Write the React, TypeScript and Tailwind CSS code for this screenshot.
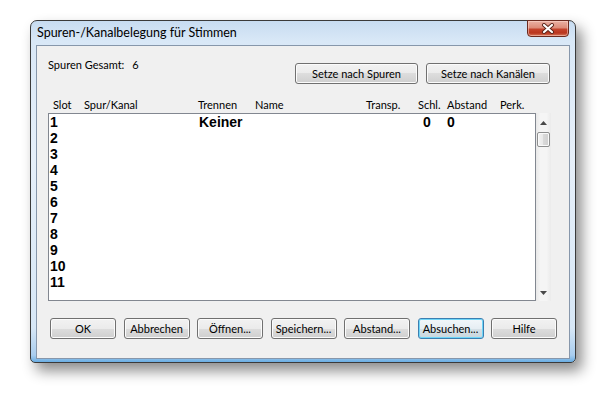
import React from "react";

const ui = "font-['Lato','Liberation_Sans',sans-serif] text-[11px] text-black";

function Btn({ label, w, def }: { label: string; w: string; def?: boolean }) {
  return (
    <div
      className={`${w} h-[21px] rounded-[3px] border flex items-center justify-center ${
        def
          ? "border-[#3c7fb1] bg-[linear-gradient(#f2f7fa_0%,#e6eef3_50%,#d6e1e7_50%,#cad7de_100%)] shadow-[inset_0_0_0_1px_#6fd6f8]"
          : "border-[#707070] bg-[linear-gradient(#f2f2f2_0%,#ebebeb_50%,#dddddd_50%,#cfcfcf_100%)] shadow-[inset_0_0_0_1px_#fbfbfb]"
      }`}
    >
      <span className="leading-none">{label}</span>
    </div>
  );
}

const headers = [
  { t: "Slot", w: "w-[31px]" },
  { t: "Spur/Kanal", w: "w-[114px]" },
  { t: "Trennen", w: "w-[57px]" },
  { t: "Name", w: "w-[111px]" },
  { t: "Transp.", w: "w-[52px]" },
  { t: "Schl.", w: "w-[29px]" },
  { t: "Abstand", w: "w-[53px]" },
  { t: "Perk.", w: "w-[40px]" },
];

const bottom = ["OK", "Abbrechen", "Öffnen...", "Speichern...", "Abstand...", "Absuchen...", "Hilfe"];

export default function App() {
  const rows = Array.from({ length: 11 }, (_, i) => i + 1);
  return (
    <div className={`w-[613px] h-[393px] bg-white pt-[20px] pl-[30px] overflow-hidden ${ui}`}>
      <div className="w-[546px] h-[343px] flex flex-col rounded-t-[7px] rounded-b-[5px] border border-[#3a3a3a] shadow-[6px_8px_14px_rgba(0,0,0,0.45)] bg-[linear-gradient(180deg,#c7dcf1_0%,#d9e8f7_6%,#e6eff9_40%,#d7e7f6_90%,#a9cdee_98%,#6aaee3_100%)]">
        {/* title bar */}
        <div className="h-[24px] flex justify-between pl-[6px] pr-[6px]">
          <span className="self-center text-[12.5px]">Spuren-/Kanalbelegung für Stimmen</span>
          <div className="-mt-[1px] w-[42px] h-[17px] rounded-b-[4px] border border-[#6b2a1f] flex items-center justify-center bg-[linear-gradient(180deg,#eab1a4_0%,#dd8c79_45%,#c4432c_55%,#b9361f_80%,#d87a5e_100%)] shadow-[inset_0_0_0_1px_rgba(255,220,210,0.5)]">
            <svg width="14" height="11" viewBox="0 0 14 11">
              <path d="M3 2 L11 9 M11 2 L3 9" stroke="#5a2318" strokeWidth="4" strokeLinecap="round" />
              <path d="M3 2 L11 9 M11 2 L3 9" stroke="#ffffff" strokeWidth="2.2" strokeLinecap="round" />
            </svg>
          </div>
        </div>

        {/* client area */}
        <div className="mx-[5px] h-[314px] border border-[#8797ab] bg-[#f0f0f0] flex flex-col">
          <div className="flex items-start pt-[11px] pl-[11px] pr-[19px]">
            <span className="leading-[16px]">
              Spuren Gesamt:<span className="ml-[8px]">6</span>
            </span>
            <div className="ml-auto mt-[6px] flex gap-[8px]">
              <Btn label="Setze nach Spuren" w="w-[123px]" />
              <Btn label="Setze nach Kanälen" w="w-[124px]" />
            </div>
          </div>

          <div className="mt-[13px] flex pl-[16px] leading-[16px] h-[16px]">
            {headers.map((h) => (
              <span key={h.t} className={h.w}>
                {h.t}
              </span>
            ))}
          </div>

          <div className="ml-[11px] flex h-[188px]">
            <div className="w-[488px] h-full border border-[#828790] bg-white pl-[1px] font-['Liberation_Sans',Arial,sans-serif] font-bold text-[14px] leading-[16px]">
              {rows.map((n) => (
                <div key={n} className="flex h-[16px]">
                  <span className="w-[149px]">{n}</span>
                  {n === 1 && (
                    <>
                      <span className="w-[224px]">Keiner</span>
                      <span className="w-[24px]">0</span>
                      <span>0</span>
                    </>
                  )}
                </div>
              ))}
            </div>
            <div className="w-[15px] h-full flex flex-col items-center bg-[linear-gradient(90deg,#e8e8e8,#f5f5f5_30%,#f5f5f5_70%,#ebebeb)]">
              <div className="h-[19px] flex items-center justify-center">
                <svg width="7" height="4" viewBox="0 0 7 4">
                  <path d="M0 4 L3.5 0 L7 4 Z" fill="#4a4a4a" />
                </svg>
              </div>
              <div className="w-[13px] h-[15px] rounded-[2px] border border-[#8e8f8f] bg-[linear-gradient(90deg,#f3f3f3,#e8e8e8_50%,#d9d9d9_50%,#cfcfcf)] shadow-[inset_0_0_0_1px_#fafafa]" />
              <div className="mt-auto h-[17px] flex items-center justify-center">
                <svg width="7" height="4" viewBox="0 0 7 4">
                  <path d="M0 0 L7 0 L3.5 4 Z" fill="#4a4a4a" />
                </svg>
              </div>
            </div>
          </div>

          <div className="mt-[17px] ml-[13px] flex gap-[7.5px]">
            {bottom.map((b) => (
              <Btn key={b} label={b} w="w-[66px]" def={b === "Absuchen..."} />
            ))}
          </div>
        </div>
      </div>
    </div>
  );
}
